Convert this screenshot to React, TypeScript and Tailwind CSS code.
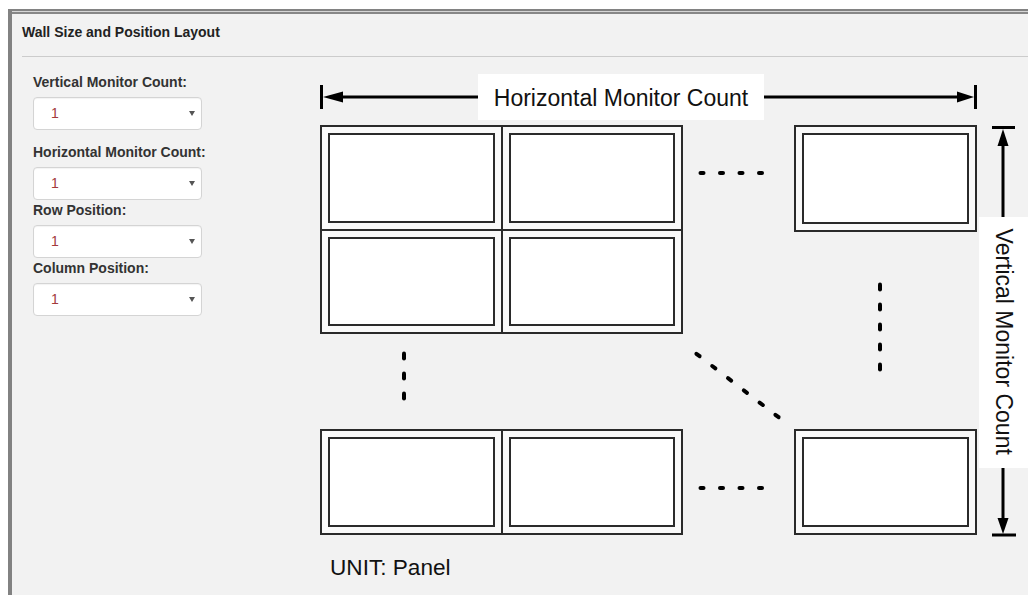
import React from 'react';

const fields = ['Vertical Monitor Count:', 'Horizontal Monitor Count:', 'Row Position:', 'Column Position:'];
const gaps = ['mt-0', 'mt-[12px]', 'mt-0', 'mt-0'];

function Monitor({ x, y, w, h }: { x: number; y: number; w: number; h: number }) {
  return (
    <g>
      <rect x={x} y={y} width={w} height={h} fill="#f9f9f9" stroke="#2a2a2a" strokeWidth="2" />
      <rect x={x + 8} y={y + 8} width={w - 16} height={h - 16} fill="#ffffff" stroke="#2a2a2a" strokeWidth="2" />
    </g>
  );
}

function Dot({ x1, y1, x2, y2 }: { x1: number; y1: number; x2: number; y2: number }) {
  return <line x1={x1} y1={y1} x2={x2} y2={y2} stroke="#000" strokeWidth="4" strokeLinecap="round" />;
}

function WallDiagram() {
  const hDots = (y: number) =>
    [702, 721.5, 741, 760.5].map((cx) => <Dot key={`${y}-${cx}`} x1={cx - 1.5} y1={y} x2={cx + 1.5} y2={y} />);
  const diag = [0, 1, 2, 3, 4, 5].map((i) => {
    const cx = 698 + i * 15.8;
    const cy = 355 + i * 12.2;
    return <Dot key={`d${i}`} x1={cx - 1.6} y1={cy - 1.2} x2={cx + 1.6} y2={cy + 1.2} />;
  });

  return (
    <svg width="728" height="538" viewBox="300 57 728 538" xmlns="http://www.w3.org/2000/svg" className="shrink-0 ml-[98px]">
      {/* horizontal dimension */}
      <line x1="321.5" y1="85" x2="321.5" y2="109" stroke="#000" strokeWidth="3" />
      <polygon points="323,97 343,91.5 343,102.5" fill="#000" />
      <line x1="342" y1="97" x2="478" y2="97" stroke="#000" strokeWidth="3" />
      <rect x="478" y="74" width="286" height="46" fill="#fff" />
      <text x="621" y="105.5" textAnchor="middle" fontSize="23" fontFamily="'Liberation Sans', Arial, sans-serif" fill="#111">
        Horizontal Monitor Count
      </text>
      <line x1="764" y1="97" x2="958" y2="97" stroke="#000" strokeWidth="3" />
      <polygon points="957,91.5 957,102.5 974,97" fill="#000" />
      <line x1="975.5" y1="85" x2="975.5" y2="109" stroke="#000" strokeWidth="3" />

      {/* vertical dimension */}
      <line x1="992" y1="127.5" x2="1015" y2="127.5" stroke="#000" strokeWidth="3" />
      <polygon points="1003,129 997.5,146 1008.5,146" fill="#000" />
      <line x1="1003" y1="145" x2="1003" y2="217" stroke="#000" strokeWidth="3" />
      <rect x="979" y="217" width="49" height="251" fill="#fff" />
      <text
        transform="translate(995.5 341.7) rotate(90)"
        x="0"
        y="0"
        textAnchor="middle"
        fontSize="23"
        fontFamily="'Liberation Sans', Arial, sans-serif"
        fill="#111"
      >
        Vertical Monitor Count
      </text>
      <line x1="1003" y1="468" x2="1003" y2="519" stroke="#000" strokeWidth="3" />
      <polygon points="997.5,518 1008.5,518 1003,534" fill="#000" />
      <line x1="992" y1="535" x2="1016" y2="535" stroke="#000" strokeWidth="3" />

      {/* top grid */}
      <Monitor x={321} y={126} w={181} h={104} />
      <Monitor x={502} y={126} w={180} h={104} />
      <Monitor x={321} y={230} w={181} h={103} />
      <Monitor x={502} y={230} w={180} h={103} />
      <Monitor x={795} y={126} w={181} h={105} />
      {hDots(173)}

      {/* ellipsis dots */}
      {[356, 376, 396].map((cy) => (
        <Dot key={`l${cy}`} x1={404} y1={cy - 2.5} x2={404} y2={cy + 2.5} />
      ))}
      {[287, 307, 327, 347, 367].map((cy) => (
        <Dot key={`r${cy}`} x1={880} y1={cy - 2.5} x2={880} y2={cy + 2.5} />
      ))}
      {diag}

      {/* bottom row */}
      <Monitor x={321} y={430} w={181} h={104} />
      <Monitor x={502} y={430} w={180} h={104} />
      <Monitor x={795} y={430} w={181} h={104} />
      {hDots(488)}

      <text x="330" y="575" fontSize="22.6" fontFamily="'Liberation Sans', Arial, sans-serif" fill="#111">
        UNIT: Panel
      </text>
    </svg>
  );
}

export default function App() {
  return (
    <div className="w-[1028px] h-[595px] overflow-hidden bg-white pt-[9px] pl-[8px] flex flex-col font-['Liberation_Sans',Arial,sans-serif] text-[#333]">
      <div className="flex-1 flex flex-col border-t-2 border-l-4 border-[#828282] bg-[#d6d6d6] pt-px">
        <div className="flex-1 flex flex-col border-t-2 border-[#878787] bg-[#f2f2f2]">
          {/* Heading */}
          <div className="ml-[10px] pt-[8px] pb-[14px] border-b border-[#cccccc]">
            <h3 className="text-[14px] leading-[20px] font-bold text-[#222]">Wall Size and Position Layout</h3>
          </div>

          {/* Body */}
          <div className="flex items-start">
            <form className="pl-[21px] pt-[15px] w-[190px] shrink-0">
              {fields.map((label, i) => (
                <div key={label} className={gaps[i]}>
                  <label className="block text-[14px] leading-[20px] font-bold text-[#333] mb-[5px] whitespace-nowrap">
                    {label}
                  </label>
                  <div className="relative w-[169px]">
                    <select
                      defaultValue="1"
                      className="appearance-none block w-full h-[33px] pl-[17px] pr-6 text-[14px] text-[#a33a3a] bg-white border border-[#d4d4d4] rounded-[4px] shadow-[inset_0_1px_1px_rgba(0,0,0,0.05)] outline-none"
                    >
                      <option value="1">1</option>
                    </select>
                    <span className="pointer-events-none absolute right-[7px] top-[14px] w-0 h-0 border-l-[3px] border-r-[3px] border-t-[5px] border-l-transparent border-r-transparent border-t-[#555]" />
                  </div>
                </div>
              ))}
            </form>
            <WallDiagram />
          </div>
        </div>
      </div>
    </div>
  );
}
